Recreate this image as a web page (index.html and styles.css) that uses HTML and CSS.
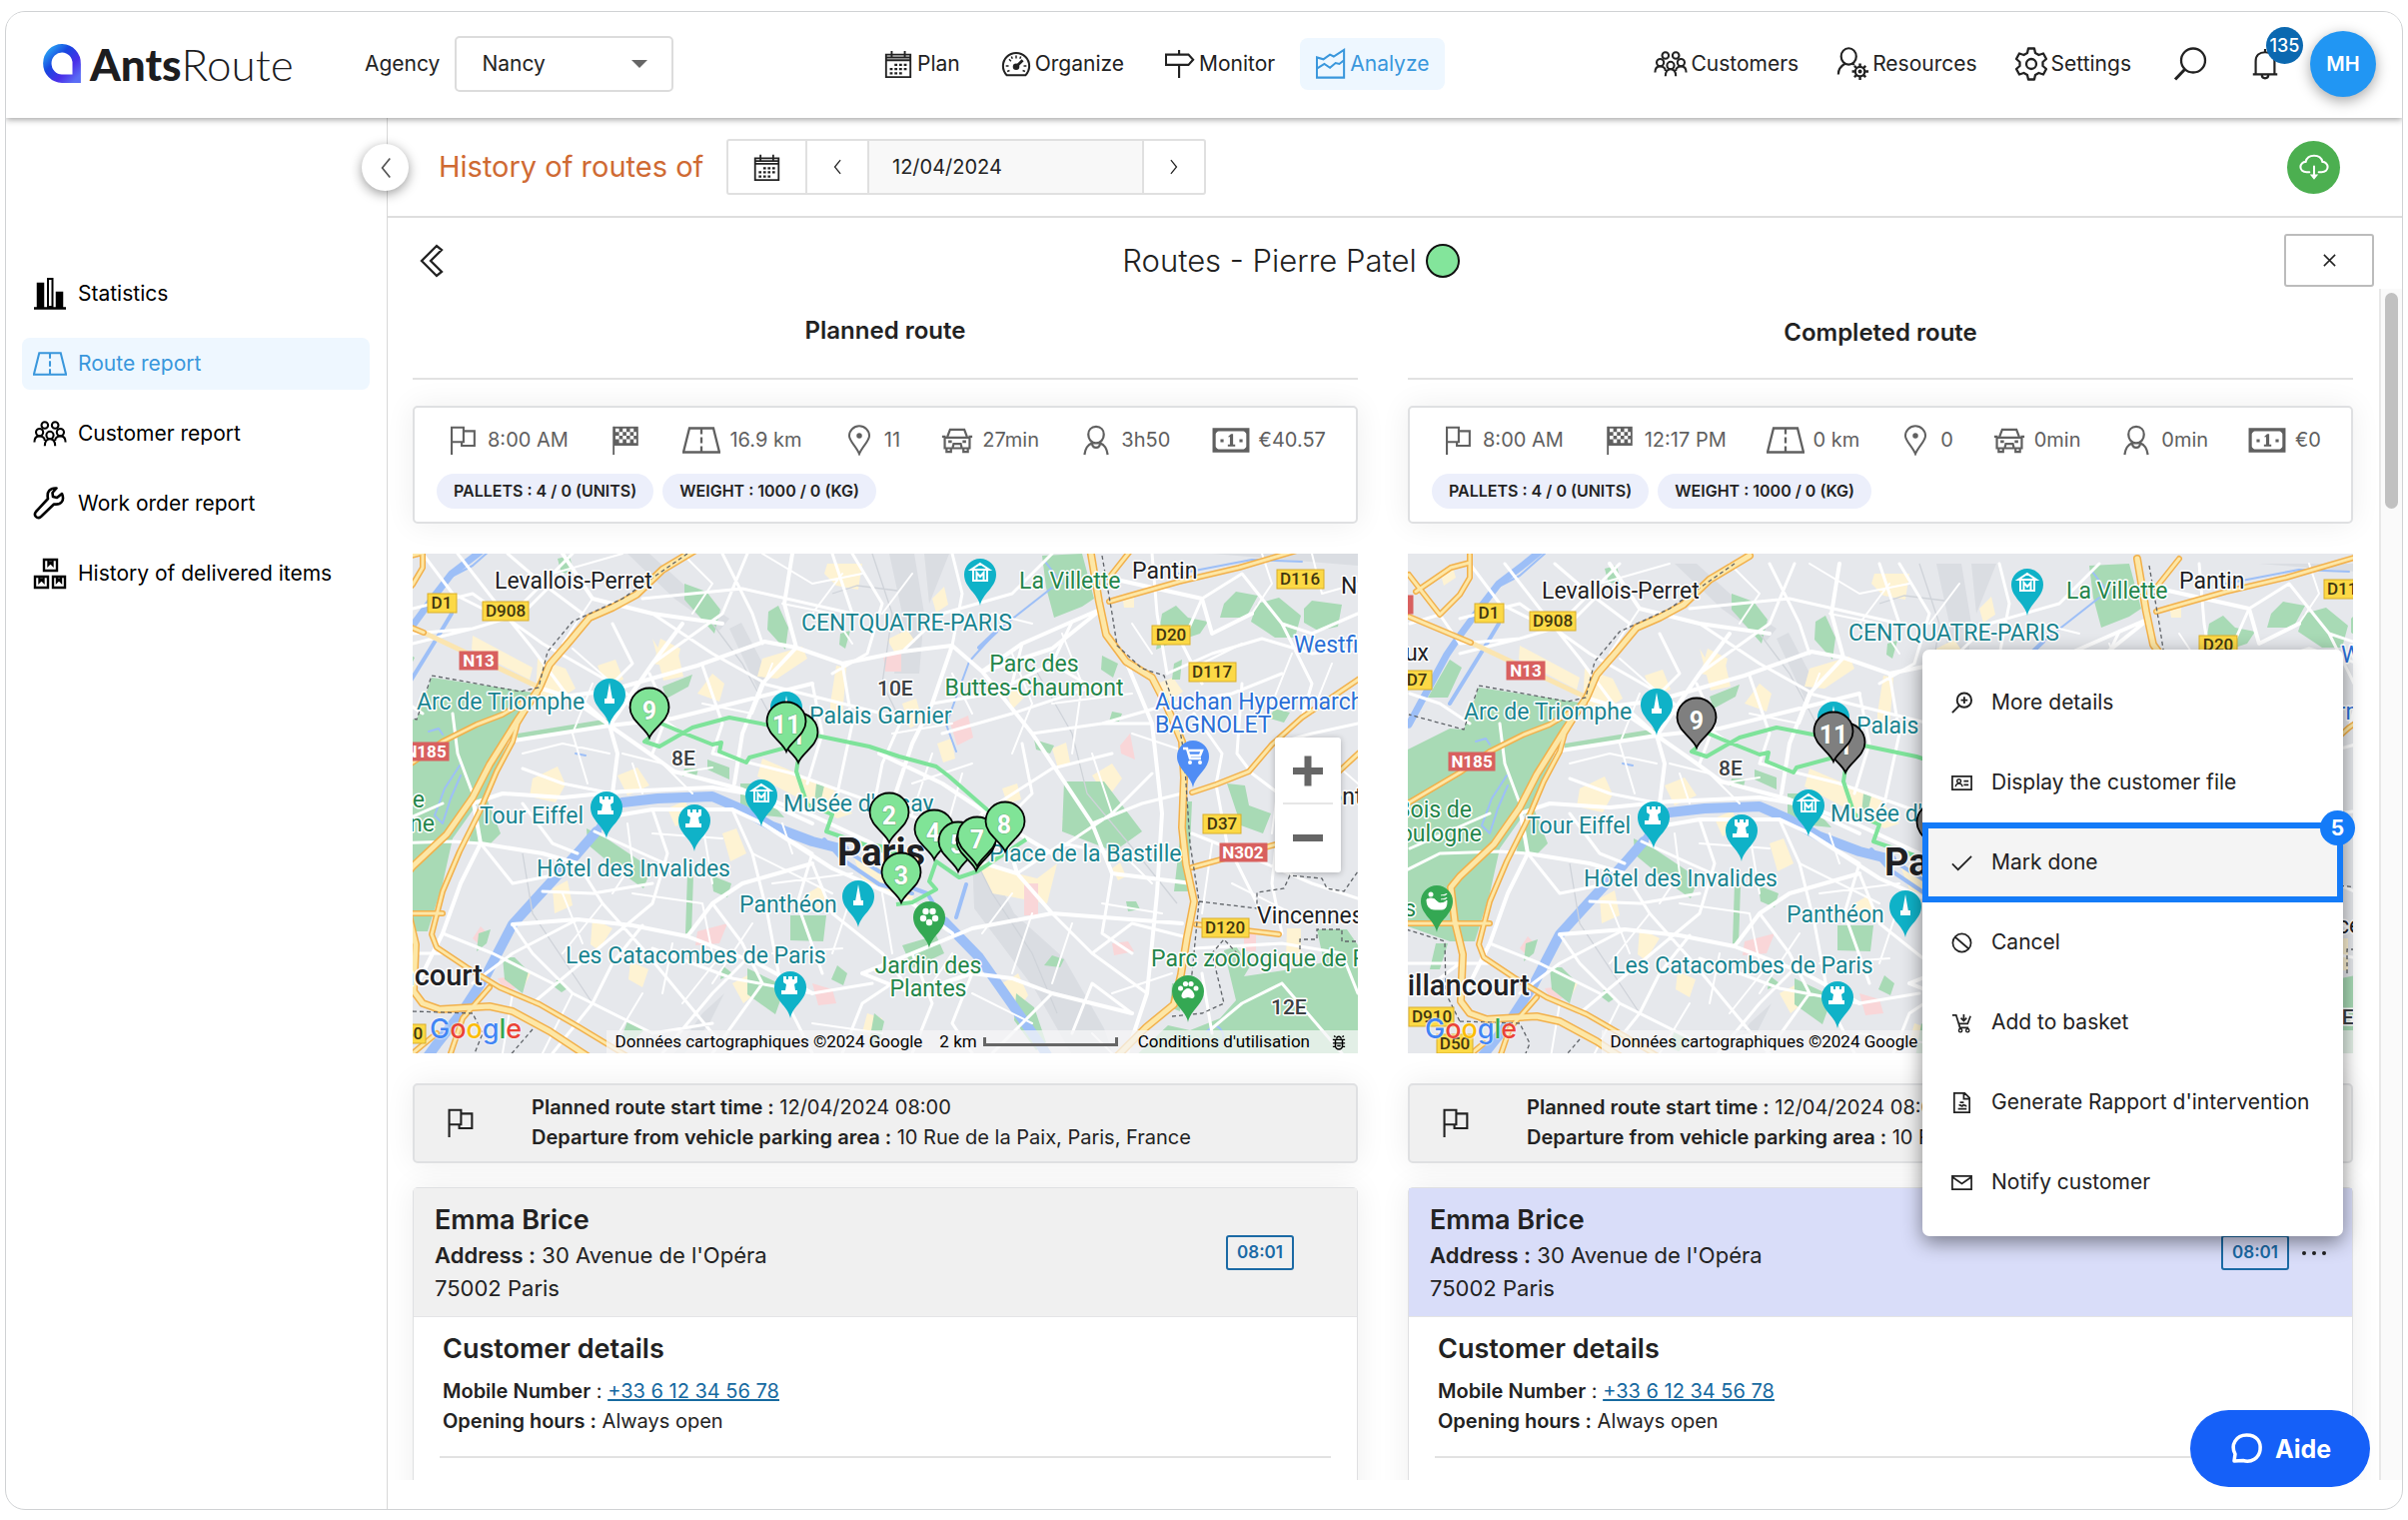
FILE: index.html
```html
<!DOCTYPE html>
<html lang="en">
<head>
<meta charset="utf-8">
<title>AntsRoute - Route report</title>
<meta name="viewport" content="width=device-width, initial-scale=1">
<link rel="stylesheet" href="styles.css">
</head>
<body>
<svg class="sprite" aria-hidden="true">
  <defs>
    <linearGradient id="logo-a" x1="0" y1="0" x2="1" y2="1"><stop offset="0" stop-color="#2ba8f5"/><stop offset=".35" stop-color="#1747e0"/><stop offset=".7" stop-color="#4a2fe8"/><stop offset="1" stop-color="#5a6cf5"/></linearGradient>
  </defs>
  <symbol id="i-calendar" viewBox="0 0 32 32"><path d="M3 6h26v24H3zM3 12h26M3 9h26M9 2v6M23 2v6" fill="none" stroke="currentColor" stroke-width="2"/><path d="M12 17h3M17 17h3M22 17h3M7 21.500h3M12 21.500h3M17 21.500h3M22 21.500h3M7 26h3M12 26h3M17 26h3" stroke="currentColor" stroke-width="2.500"/></symbol>
  <symbol id="i-gauge" viewBox="0 0 32 32"><path d="M6 28A14 14 0 1 1 26 28Z" fill="none" stroke="currentColor" stroke-width="2.200" stroke-linejoin="round"/><circle cx="16" cy="19" r="3.500" fill="currentColor"/><path d="M16 19l7-7" stroke="currentColor" stroke-width="3"/><path d="M5 18h3M24 18h3M16 7v3M8.500 11l2 2M6.500 24l2.500-1M25.500 24L23 23M11 8l1 2.500M21 8l-1 2.500" stroke="currentColor" stroke-width="1.600"/></symbol>
  <symbol id="i-sign" viewBox="0 0 32 32"><path d="M1 6h24l5 5.500L25 17H1zM15 1v5M15 17v14" fill="none" stroke="currentColor" stroke-width="2.300"/></symbol>
  <symbol id="i-chart" viewBox="0 0 32 32"><path d="M1 9v21.500h29V1L19 8l-4-2-7 5zM1 21l8-5 6 4 6-5 4 1 5-4" fill="none" stroke="currentColor" stroke-width="2.200"/></symbol>
  <symbol id="i-group" viewBox="0 0 36 28"><g fill="none" stroke="currentColor" stroke-width="2.200"><circle cx="12.500" cy="5" r="3.500"/><circle cx="23.500" cy="5" r="3.500"/><circle cx="7" cy="12.500" r="3.800"/><circle cx="29" cy="12.500" r="3.800"/><circle cx="18" cy="15.500" r="3.800"/><path d="M1.500 23c0-4 2-6.500 5.500-6.500s5.500 2.500 5.500 5M23.500 21.500c0-2.500 2-5 5.500-5s5.500 2.500 5.500 6.500M12.500 27c0-4.500 2-7.500 5.500-7.500s5.500 3 5.500 7.500"/></g></symbol>
  <symbol id="i-usergear" viewBox="0 0 34 36"><g fill="none" stroke="currentColor" stroke-width="2.300"><ellipse cx="13" cy="10" rx="8" ry="8.700"/><path d="M2 29c0-6 3-9 7.500-11.500M17 17.500l2 1.500"/><circle cx="25" cy="26" r="5"/><circle cx="25" cy="26" r="1"/><path stroke-width="2.600" d="M25 17.500v4M25 31v4M16.500 26h4M30 26h4M19 20l2.500 2.500M28.500 29.500L31 32M31 20l-2.500 2.500M21.500 29.500L19 32"/></g></symbol>
  <symbol id="i-gear" viewBox="0 0 34 34"><path d="M14 1.500h6l1 4.500 3.500 2 4.500-1.500 3 5.500-3.500 3v4l3.500 3-3 5.500-4.500-1.500-3.500 2-1 4.500h-6l-1-4.500-3.500-2L5 27.500 2 22l3.500-3v-4L2 12l3-5.500L9.500 8 13 6z" fill="none" stroke="currentColor" stroke-width="2.300" stroke-linejoin="round"/><circle cx="17" cy="17" r="5" fill="none" stroke="currentColor" stroke-width="2.300"/></symbol>
  <symbol id="i-search" viewBox="0 0 34 34"><circle cx="20" cy="13.500" r="12" fill="none" stroke="currentColor" stroke-width="2.300"/><path d="M12 22L2 32.500" stroke="currentColor" stroke-width="3"/></symbol>
  <symbol id="i-bell" viewBox="0 0 28 34"><path d="M1 28h26M4 28V14C4 8 8 4.500 14 4.500S24 8 24 14v14M14 1v3M10.500 28.500c0 5 7 5 7 0" fill="none" stroke="currentColor" stroke-width="2.300"/></symbol>
  <symbol id="i-cloud" viewBox="0 0 32 28"><path d="M11 19H8c-4 0-6.500-2.500-6.500-5.500S4 8 7 8c1-4 4.500-6.500 9-6.500S24 4 25 8c3 0 5.500 2.500 5.500 5.500S28 19 24 19h-3M16 13v11" fill="none" stroke="currentColor" stroke-width="2.200" stroke-linecap="round"/><path d="M11.500 21.500h9L16 27z" fill="currentColor"/></symbol>
  <symbol id="i-back" viewBox="0 0 26 34"><path d="M17 2L2 17l15 15 5-4-11-11L22 6z" fill="none" stroke="currentColor" stroke-width="2.300"/></symbol>
  <symbol id="i-left" viewBox="0 0 16 28"><path d="M13 3L4 14l9 11" fill="none" stroke="currentColor" stroke-width="2"/></symbol>
  <symbol id="i-right" viewBox="0 0 16 28"><path d="M3 3l9 11-9 11" fill="none" stroke="currentColor" stroke-width="2"/></symbol>
  <symbol id="i-close" viewBox="0 0 16 16"><path d="M2 2l12 12M14 2L2 14" stroke="currentColor" stroke-width="1.600"/></symbol>
  <symbol id="i-bars" viewBox="0 0 34 34"><path d="M1 31.500h32M5 7h5v24H5zM24 16h5v15h-5z" fill="currentColor" stroke="currentColor" stroke-width="2.500"/><path d="M15 2h4.500v28H15z" fill="none" stroke="currentColor" stroke-width="2"/></symbol>
  <symbol id="i-road" viewBox="0 0 38 26"><path d="M7 1h24l6 24H1zM19 1v6M19 10v6M19 19v6" fill="none" stroke="currentColor" stroke-width="2.300"/></symbol>
  <symbol id="i-wrench" viewBox="0 0 34 34"><path d="M29 7l-5 4-4-1-.500-4 4-4.500C17 1 13.500 5 15 12L3 25c-3 4 1.500 8 5 5l13-12.500c7 1 11-3.500 8-10.500z" fill="none" stroke="currentColor" stroke-width="2.600" stroke-linejoin="round"/></symbol>
  <symbol id="i-boxes" viewBox="0 0 34 32"><path d="M11 2h13v11H11zM2 19h13v11H2zM20 19h12v11H20zM15.500 2v5l2-2 2 2V2M6.500 19v5l2-2 2 2v-5M24 19v5l2-2 2 2v-5" fill="none" stroke="currentColor" stroke-width="2.400"/></symbol>
  <symbol id="i-flag" viewBox="0 0 30 34"><path d="M3 33V3h13v16H3M16 7h12v16H14v-4" fill="none" stroke="currentColor" stroke-width="2.300"/></symbol>
  <symbol id="i-finish" viewBox="0 0 30 34"><path d="M2 33V2" stroke="currentColor" stroke-width="2"/><path d="M2 2h27v21H2z" fill="currentColor"/><path fill="#fff" d="M4 4h4v4H4zM12 4h4v4h-4zM20 4h4v4h-4zM8 8h4v4H8zM16 8h4v4h-4zM24 8h3v4h-3zM4 12h4v4H4zM12 12h4v4h-4zM20 12h4v4h-4zM8 16h4v4H8zM16 16h4v4h-4zM24 16h3v4h-3z"/></symbol>
  <symbol id="i-pin" viewBox="0 0 26 34"><path d="M13 32C10 24 2 18 2 12a11 10.500 0 0 1 22 0c0 6-8 12-11 20z" fill="none" stroke="currentColor" stroke-width="2.200"/><circle cx="13" cy="12" r="3" fill="currentColor"/></symbol>
  <symbol id="i-car" viewBox="0 0 36 28"><path d="M7 10L10 2h16l3 8M1 10h4M31 10h4M4 11h28v12H4zM6 23v4h5v-4M25 23v4h5v-4M13 22l1-4h8l1 4" fill="none" stroke="currentColor" stroke-width="2.500"/><path d="M8 14h4v3H8zM24 14h4v3h-4z" fill="currentColor"/></symbol>
  <symbol id="i-person" viewBox="0 0 30 32"><path d="M15 2c5 0 8 3.500 8 8s-3 9-8 9-8-4.500-8-9 3-8 8-8zM3 31c1-7 3-10 8-12 0 3 1.500 4.500 4 4.500s4-1.500 4-4.500c5 2 7 5 8 12" fill="none" stroke="currentColor" stroke-width="2.300"/></symbol>
  <symbol id="i-bill" viewBox="0 0 36 24"><path d="M2 2h32v20H2z" fill="none" stroke="currentColor" stroke-width="3"/><path d="M2 2h5l-5 5zM34 2h-5l5 5zM2 22h5l-5-5zM34 22h-5l5-5zM15 9l3-3h2v10h2v2h-7v-2h2V9zM8 11h3v3H8zM26 11h3v3h-3z" fill="currentColor"/></symbol>
  <symbol id="i-more" viewBox="0 0 24 24"><circle cx="14.500" cy="9" r="7.500" fill="none" stroke="currentColor" stroke-width="2"/><path d="M9.500 14.500L2 22M11 9h7M14.500 5.500v7" stroke="currentColor" stroke-width="2"/></symbol>
  <symbol id="i-card" viewBox="0 0 24 24"><path d="M2 5h20v14H2zM14 10h5M14 14h5" fill="none" stroke="currentColor" stroke-width="1.800"/><circle cx="9" cy="10" r="2" fill="none" stroke="currentColor" stroke-width="1.500"/><path d="M5.500 16c0-4.500 7-4.500 7 0" fill="none" stroke="currentColor" stroke-width="1.500"/></symbol>
  <symbol id="i-check" viewBox="0 0 24 24"><path d="M2 13l6 6L22 5" fill="none" stroke="currentColor" stroke-width="1.800"/></symbol>
  <symbol id="i-ban" viewBox="0 0 24 24"><circle cx="12" cy="12" r="9.500" fill="none" stroke="currentColor" stroke-width="1.800"/><path d="M5 6l14 12" stroke="currentColor" stroke-width="1.800"/></symbol>
  <symbol id="i-basket" viewBox="0 0 24 24"><path d="M2 4h4l4 13h9M9 13h9l3-8M14 3v6M11 7l3 3 3-3" fill="none" stroke="currentColor" stroke-width="1.800"/><circle cx="10.500" cy="20" r="1.700" fill="none" stroke="currentColor" stroke-width="1.500"/><circle cx="18" cy="20" r="1.700" fill="none" stroke="currentColor" stroke-width="1.500"/></symbol>
  <symbol id="i-doc" viewBox="0 0 24 24"><path d="M4 2h11l5 5v15H4zM14 2v6h6M8 18.500h9M10 11.500h4M9 15c2-2 3 2 4 0s2 1 4 0" fill="none" stroke="currentColor" stroke-width="1.800"/></symbol>
  <symbol id="i-mail" viewBox="0 0 24 24"><path d="M2 5h20v14H2zM2 6l10 7 10-7" fill="none" stroke="currentColor" stroke-width="1.800"/></symbol>
  <symbol id="i-chat" viewBox="0 0 34 34"><path d="M5 29l1-7C1 13 7 3 17.500 3S32 10 31 18s-9 13-17 10.500z" fill="none" stroke="currentColor" stroke-width="3.500" stroke-linejoin="round"/></symbol>
  <symbol id="i-bug" viewBox="0 0 16 18"><path d="M4 6h8v7a4 4 0 0 1-8 0zM5.500 5a2.500 2.500 0 0 1 5 0M4 3L2.500 1.500M12 3l1.500-1.500M1 6h3M12 6h3M1 10h14M1 14h3M12 14h3M6 13h4" fill="none" stroke="currentColor" stroke-width="1.700"/></symbol>

  <!-- map pins: the tip of each is at 24,56 -->
  <symbol id="p-stop" viewBox="0 0 48 58" overflow="visible"><path d="M24 56C20 46 4.500 39 4.500 26a19.500 19.500 0 0 1 39 0C43.500 39 28 46 24 56z" stroke="#000" stroke-width="1.800"/></symbol>
  <symbol id="p-poi" viewBox="0 0 48 58"><path d="M24 56C22 44 8 38 8 25a16 16 0 0 1 32 0C40 38 26 44 24 56z"/></symbol>
  <symbol id="p-tower" viewBox="0 0 48 58"><use href="#p-poi" width="48" height="58" fill="#0fb2c8"/><path d="M24 13l3 17h-6zM19 29h10v5H19z" fill="#fff"/></symbol>
  <symbol id="p-castle" viewBox="0 0 48 58"><use href="#p-poi" width="48" height="58" fill="#0fb2c8"/><path d="M17 14h3v3h2v-3h4v3h2v-3h3v6l-3 2 1 6h2v4H15v-4h4l1-6-3-2z" fill="#fff"/></symbol>
  <symbol id="p-museum" viewBox="0 0 48 58"><use href="#p-poi" width="48" height="58" fill="#0fb2c8"/><path d="M24 14l9 6H15zM16 31h16M17 21v10M31 21v10M20.500 30v-7l3.500 4 3.500-4v7" fill="none" stroke="#fff" stroke-width="2"/></symbol>
  <symbol id="p-flower" viewBox="0 0 48 58"><use href="#p-poi" width="48" height="58" fill="#34a853"/><g fill="#fff"><circle cx="20.500" cy="19" r="3.200"/><circle cx="27.500" cy="19" r="3.200"/><circle cx="18" cy="26" r="3.200"/><circle cx="30" cy="26" r="3.200"/><circle cx="24" cy="30" r="3.200"/></g></symbol>
  <symbol id="p-paw" viewBox="0 0 48 58"><use href="#p-poi" width="48" height="58" fill="#34a853"/><g fill="#fff"><circle cx="16.500" cy="22" r="2.500"/><circle cx="21.500" cy="17.500" r="2.600"/><circle cx="27" cy="17.500" r="2.600"/><circle cx="32" cy="22" r="2.500"/><path d="M24 22c4 0 8 7 6 9s-4 0-6 0-4 2-6 0 2-9 6-9z"/></g></symbol>
  <symbol id="p-slide" viewBox="0 0 48 58"><use href="#p-poi" width="48" height="58" fill="#34a853"/><path d="M14 23c0 6 2 10 8 10h7c5 0 5-6 5-9-3 3-7 4-10 1-2-3-6-4-10-2zM28 19c2-1 5 1 6-2M28 23c2-1 5 1 6-2" fill="#fff" stroke="#fff"/><circle cx="18" cy="18" r="2.500" fill="#fff"/></symbol>
  <symbol id="p-cart" viewBox="0 0 48 58"><use href="#p-poi" width="48" height="58" fill="#4f8df5"/><path d="M14 17h4l3 10h11M20 19h13l-2 5H21" fill="none" stroke="#fff" stroke-width="2.500"/><circle cx="21" cy="31" r="2" fill="#fff"/><circle cx="31" cy="31" r="2" fill="#fff"/></symbol>

  <symbol id="map-base" overflow="visible">
    <path d="M-60-20H1000V520H-60z" fill="#e6e8ec"/>
    <g fill="#dadde2">
      <path d="M215 0h22l50 45 30 20-10 12-45-32zM317 75l12-6 26 50-8 20zM477 0h25l10 60-5 60h-25l8-60zM512 0h25l-20 50zM560 300l22 20 20 40 50 45 40 70 10 30h-40l-40-70-60-80zM290 460l22-20-15 30-25 30h-10zM800 0h146v12z"/>
    </g>
    <g fill="#fef3d3">
      <path d="M60 82l60 32-3 12-58-30zM125 105l28 10 10 20-22 14-18-8zM240 85l12 20 14-4 5 22-20 4zM185 112l18-6 8 20-18 6zM120 225l25-12 8 18-10 18-26-6zM205 222l20-8 12 18-22 10zM248 85l20 10-5 20-22-5zM285 140l15-20 12 10-5 18zM350 105l40-12 5 12-30 20-20-2zM418 150l6-38 10 2-4 50-12 8zM350 205l70 30 20 25-15 5-80-42zM415 10h35l-4 26-22-4-12-12zM440 300l30 10 35 10-5 28-50-22zM565 310l60 15 20-15-10 40-55-10zM520 45l12-12 4 18-12 8zM475 86l20-10 8 12-20 12zM490 150l14-5 6 22-12 8zM525 190l14-5 4 20-12 4zM595 140l12-10 5 14-12 12zM590 235l15-5 4 16-14 4zM640 195l14-6 4 20-12 6zM680 222l20-12 10 15-15 20zM710 40h12v14h-10zM180 365l20 10-14 22-8-6zM140 335l15-8 5 25-18 8zM100 410l18 10-8 16-14-8zM310 280l14-5 10 25-16 8zM395 340l14-8 6 20-14 4zM320 430l15-8 8 18-12 10zM700 315l8-6 6 14-8 4zM875 375h14v32h-15zM590 430l16-10 10 22-10 14zM455 460l15 5-5 20-15-6zM745 130l16-6 10 14-14 10zM218 408l18 8-6 18-14-8zM255 255l18-8 6 18-16 8zM650 265l18-6 8 14-18 8zM-20 8l12-8 4 14-12 8z"/>
    </g>
    <g fill="#f9d6d8"><path d="M285 378l30-8-8 20-24 2zM471 100h18v18h-16zM538 170l18-8 5 22-16 8zM708 192l10-12 5 26-14-6zM612 330h14v32h-14zM400 430l20 6 4 14-18 2zM700 390l16-2 6 10-20 4zM85 425l16-2 6 10-14 6zM60 385l8-12 6 6-6 14zM832 380h12v18h-12z"/></g>
    <g fill="#a8dab5">
      <path d="M19 124L120 139 97 185 72 240 40 285 30 330 15 378-10 378-60 360V190L-10 165 4 166z"/>
      <path d="M70 235l18 45-12 12-20-2zM145 5l12-3 4 16-12 2zM272 30l22 8 14 18-6 24-30-34zM356 58l10-6 10 22-3 22-18-20zM250 133l30-12-4 12-22 12zM295 206l22 8 0 12-22-10zM272 215h14l-2 8h-14zM404 230l8 2-4 18h-6zM428 80l10-3-5 18-6-4zM328 230l14 0 30 34-20-2-24-12zM174 275l20 10 45 30-8 20-20-14-36-30zM275 320l6 2-2 60-6-2zM299 322l20 8-4 14-14-6zM378 362h36l-3 26-33-1zM335 415l38 18-10 28-28-20zM425 412l10 8-4 12-12-6zM310 412l10 8-12 6zM145 425l10 10-6 4-8-6zM90 404l12 0 14 14-6 22-18-14zM66 380l12-4-4 14-10 8zM462 460l10 8-6 26h-10zM215 468l18 8-14 12-10-4z"/>
      <path d="M630 2l40-2 12 45-12 8-28 11-8-30zM652 228l40 0 38 50-28 20-52-20zM490 392l34-10 8 18-32 15zM622 186l20 6-4 8-14-4zM690 102l16 8-5 14-12-8zM750 60l14-8 12 12 20 4-8 12-30 10-14 6zM812 50l12-12 22 4-12 22-26 0zM845 50l22-6 22 18-6 22-20 0-24-16zM892 55l8-8 30 4-4 22-20 4-14-8zM700 158l10 2-3 8h-10zM772 248h8l-4 90h-14zM815 230l18 2 4 20 22 8-8 20-22-8zM770 315h8l-5 20h-8zM604 440l18 14 12 35-10 8-22-30zM640 402l12 4-4 8-16-2zM714 348h10l4 8-12 2zM905 376h30l14 20v110H720l36-34 22 5 30-12 16-18-12-50 12-4 14 20-6 10 40-6 40-8zM760 430h10l-2 28-10-4zM862 155l16 4-6 10-14-4zM762 110l8-4-2 20h-8z"/>
      <path d="M105 180l92-15v6l-92 16z"/>
      <path d="M-10 96l12 8-14 30-20 0zM-24 380l12 0-8 26h-10z"/>
    </g>
    <g fill="none" stroke="#9dbff7" stroke-linecap="round" stroke-linejoin="round">
      <path stroke-width="10" d="M210 249L245 245 300 243 330 256 360 273 400 288 432 296M184 278L164 301 130 338 100 371 74 421 50 458 24 491 10 510M532 368L567 404 600 451 630 494 640 510"/>
      <path stroke-width="7" d="M210 249L195 262 184 278M90-20L64 1 39 20 22 42 0 72-13 91-51 161"/>
      <path stroke-width="4" d="M432 296L467 318 490 331 515 340 532 368M412 286L430 306 467 331 500 340M554 331L544 364M584 78L567 94M39 60L24 85-10 140"/>
      <path stroke-width="2" d="M640 34L584 78 557 108 534 171 544 198M37 24L60 12 85-10M767 20L840 6 890 8M633 8L650 30M47 212L32 235 22 262 30 270 38 245 48 222M16 178l10-3 4 6M163 200l10 2M795 478c10-12 20 0 15 14"/>
    </g>
    <g fill="none" stroke="#cfd3d9" stroke-width="1.300"><path d="M420 40l25-8 40 5M300 70l30 40 35 65M620 110l40 70 15 60 50 60 40 50M560 300l20 40 40 60 25 60M110 300l10 60 60 90M460 0l20 60-10 70 20 40"/></g>
    <g fill="none" stroke="#fff" stroke-linejoin="round" stroke-linecap="round">
      <path stroke-width="4" d="M135 145L197 137 285 112 352 88 384 94 430 110 490 98 540 92 570 118 610 90 660 68 690 55M197 172L237 200 262 218 330 236 400 262 460 290M197 172L205 200 200 240 195 262M197 172L170 148 120 132M197 172L240 110 270 70M197 172L260 165 320 150 400 130M95 188L197 172M60 250L90 240 150 244 210 238 300 234 335 240 400 270M205 262L240 256 320 256 350 270 420 315 500 350 540 380M60 244L68 290 48 330 30 380 0 440M68 290L130 300 165 310M100 371L165 366 220 372 275 383 345 410 400 440M275 383L300 350 330 330 400 310M384 94L372 50 380 0M384 94L350 130 330 180 322 230M540 92L520 150 500 190 480 250 470 300M570 118L620 180 680 270 700 320 780 330M467 200L530 230 590 270 640 300M590 270L605 320 640 360 770 370M640 360L560 375 500 400 450 420M690 55L640 95 570 118M605 320L540 300M450 420L500 440 560 420 600 425 640 440 720 460M714 108L740 170 750 260 745 340 735 440 715 500M700 25L790 45 800 80 840 60M150 0L180 45 240 60 310 70"/>
      <path stroke-width="3" d="M45 0L80 45 120 95 157 145 197 172M0 55L60 40 130 90 200 130 270 180M95 0L130 30 170 60M100 60L140 20 160 0M0 90L60 75 110 60 150 20M200 70L220 110 190 140M230 45L330 35 440 60M240 60L300 100 350 128M310 0L340 60 350 90M440 0L470 50 455 100 420 120M440 60L420 0M335 0L310 60 240 110M290 112L310 170 300 200M237 120L255 160 240 200M350 130L430 150 490 165M400 130L410 180 395 230M430 110L440 170 425 240M490 165L470 210 460 260M300 200L380 220 450 245 520 270M200 240L150 230 110 215M110 250L140 290 165 300M68 290L100 330 150 320M130 338L180 340 240 330M165 310L190 350 230 395 300 480 320 500M182 278L230 300 275 320M240 256L255 300 240 350 180 400 120 450M320 256L340 300 355 360 370 440 400 500M350 270L400 300 385 350 410 420M230 372L200 410 180 450 140 500M300 350L330 390 350 430 300 500M400 310L420 360 470 400 500 440M100 371L120 400 160 440 240 480 300 470M30 380L80 400 140 430M60 430L100 400 165 366M240 395L320 425 400 440 460 430M250 500L300 440 340 400M430 500L450 450 480 430M500 400L520 450 500 500M560 420L540 470 560 500M640 440L600 480 580 500M720 460L680 430 660 480M640 360L680 400 735 440M680 400L720 370 775 384M700 320L690 380 720 400M620 180L690 170 760 150M530 180L600 160 690 130M680 270L730 250 770 240M640 300L700 260 740 220M605 320L650 290 700 300M540 300L570 260 640 215 700 200M590 270L620 240 610 190M520 150L580 140 640 110M490 98L530 60 600 40M540 92L550 40 540 0M600 40L640 0M660 68L640 110 690 140M610 90L600 130M740 0L745 60 755 120M790 45L830 20 870 70 900 80 946 60M755 120L800 100 850 85 900 100 946 95M760 150L820 140 870 120M790 45L770 90 790 130M830 130L825 200 840 220M782 160L810 200 804 231M870 70L900 130 890 164M804 231L815 290 845 350M840 220L880 250 946 240M780 280L830 300 900 330 946 345M860 191L900 180 946 170M864 291L860 330 870 380M782 395L870 390 930 400M790 420L800 480M930 400L946 440M870 430L930 500M870 430L830 450 800 475M740 170L690 170M-50 60L-20 51 0 80 60 75M-50 130L-20 140 10 160M30 250L-50 285M40 160L45 200 60 240M-60 310L-20 290 40 288 68 290M-60 400L-10 400 30 400M-40 430L0 400M10 0L40 40 80 60"/>
      <path stroke-width="2" d="M160 95L200 130 230 170M140 20L210 0M180 45L150 90M270 0L300 30 280 60M350 0L400 30 450 20M370 50L420 60 440 90M290 150L340 160 360 110M210 200L250 210 280 240M110 200L150 190 197 200M215 270L220 310 200 340M240 280L310 285M290 270L300 330M340 300L420 340M360 330L440 320M150 340L170 390M190 350L150 400M220 340L290 350 300 400M260 390L250 440M310 400L270 450M340 370L300 430M360 400L430 395M380 300L370 270M440 340L420 400M470 340L480 400M400 470L470 480M230 440L200 490M100 440L90 500M160 440L130 500M520 200L500 260M550 220L530 290M500 230L560 210M480 180L540 170M540 120L560 160M580 60L620 70M600 100L620 150 600 200M650 80L670 130 660 200M640 150L720 140M680 200L700 260M600 340L570 380M620 360L600 420M660 370L640 430M690 350L750 360M700 440L760 420M560 440L620 470M680 480L700 500M540 400L520 430M830 90L790 110M880 100L860 150M920 110L900 160M870 200L860 280M900 190L946 230M800 290L790 360M820 330L900 370M900 0L910 40 946 30M850 0L860 30 840 60M720 70L740 100M720 180L780 200M710 300L740 330M180 130L160 180 175 230M220 210L230 240M260 220L300 214M430 20L400 60M500 20L470 60"/>
    </g>
    <g fill="none" stroke="#fbe5b0" stroke-width="5"><path d="M11 79L127 134"/></g>
    <g fill="none" stroke-linejoin="round" stroke-linecap="round">
      <g stroke="#f2b04a">
        <path stroke-width="8" d="M290-8L250 16 224 41 200 54 177 64 157 88 137 111 127 134 104 168 77 211 60 244 34 281 0 313-9 324-5 358 3 391 1 438 10 450 27 456 77 453 100 458 137 478 175 503M678-5L687 48 694 81 714 108 740 124 754 151 770 188 772 224 770 274 774 311 782 348 775 384 769 421 762 451 734 474 705 503"/>
        <path stroke-width="6" d="M127 134L105 170 100 188 84 218 67 258 47 298 30 338 19 381 24 394 54 414 87 434 127 451 167 474 215 503M-61 245L0 209 30 188 64 171 90 161 125 140M10-9V14L0 31-20 51-51 11M10-1L-9 4-44 28M-51 53L11 79M895-6L827 14 767 28 714 43 697 48M720-5L697 24M955 120L890 164 860 191 837 218 804 231 780 239M955 192L927 218M780 314L864 291M784 371L867 381M-60 360L30 360M77 434L50 465 38 500M0 500L24 480"/>
      </g>
      <g stroke="#fde7a6">
        <path stroke-width="5" d="M290-8L250 16 224 41 200 54 177 64 157 88 137 111 127 134 104 168 77 211 60 244 34 281 0 313-9 324-5 358 3 391 1 438 10 450 27 456 77 453 100 458 137 478 175 503M678-5L687 48 694 81 714 108 740 124 754 151 770 188 772 224 770 274 774 311 782 348 775 384 769 421 762 451 734 474 705 503"/>
        <path stroke-width="3" d="M127 134L105 170 100 188 84 218 67 258 47 298 30 338 19 381 24 394 54 414 87 434 127 451 167 474 215 503M-61 245L0 209 30 188 64 171 90 161 125 140M10-9V14L0 31-20 51-51 11M10-1L-9 4-44 28M-51 53L11 79M895-6L827 14 767 28 714 43 697 48M720-5L697 24M955 120L890 164 860 191 837 218 804 231 780 239M955 192L927 218M780 314L864 291M784 371L867 381M-60 360L30 360M77 434L50 465 38 500M0 500L24 480"/>
      </g>
    </g>
    <path fill="none" stroke="#5f6368" stroke-width="1.300" stroke-dasharray="4 3" d="M275 0L210 45 160 68 135 98 126 134 108 138 19 122 4 166-51 151M690 2L700 60 705 92 730 115 752 122 765 160 772 200 778 290 787 348 845 355V339L872 335 878 322 910 325 915 335 932 338 946 318M787 348L780 420 775 460M760 463L790 460 812 450 800 400 812 386 825 400M0 458L60 460 70 480 62 500M120 476L95 505M888 410V386H905V376H930V388H946M-60 364L-15 378-14 430 0 458"/>
    <g fill="none" stroke="#7ee39a" stroke-width="4" stroke-linejoin="round"><path d="M237 165L270 179 300 191 309 189 307 198 334 209 337 204 374 194M237 184L232 188 247 193 280 174 317 164 374 175M386 180L404 182 457 193 487 203 524 213 537 223 593 272M386 205L384 218 395 251 420 261 414 278 487 303M462 292L484 295 482 305M484 351L500 349 524 336 517 328 524 308 547 324 565 318 614 286"/></g>
  </symbol>
</svg>

<div class="frame">
  <header class="topbar">
    <a class="logo" href="#" aria-label="AntsRoute">
      <svg class="logo-mark" viewBox="0 0 40 40"><path d="M34 20V34H20A14 14.500 0 1 1 34 20Z" fill="none" stroke="url(#logo-a)" stroke-width="8"/></svg>
      <span class="logo-text"><b>Ants</b>Route</span>
    </a>
    <div class="agency">
      <label for="agency">Agency</label>
      <span class="select-wrap"><select id="agency"><option>Nancy</option></select></span>
    </div>
    <nav class="nav nav-main">
      <a href="#"><svg class="ic"><use href="#i-calendar"/></svg>Plan</a>
      <a href="#"><svg class="ic"><use href="#i-gauge"/></svg>Organize</a>
      <a href="#"><svg class="ic"><use href="#i-sign"/></svg>Monitor</a>
      <a href="#" class="active"><svg class="ic"><use href="#i-chart"/></svg>Analyze</a>
    </nav>
    <nav class="nav nav-side">
      <a href="#"><svg class="ic wide"><use href="#i-group"/></svg>Customers</a>
      <a href="#"><svg class="ic wide"><use href="#i-usergear"/></svg>Resources</a>
      <a href="#"><svg class="ic wide"><use href="#i-gear"/></svg>Settings</a>
    </nav>
    <div class="tools">
      <button class="plain" aria-label="Search"><svg class="ic wide"><use href="#i-search"/></svg></button>
      <button class="plain bell" aria-label="Notifications"><svg class="ic"><use href="#i-bell"/></svg><span class="count">135</span></button>
      <button class="avatar">MH</button>
    </div>
  </header>

  <div class="body">
    <aside class="sidebar">
      <button class="collapse" aria-label="Collapse menu"><svg class="chev"><use href="#i-left"/></svg></button>
      <nav class="side-nav">
        <a href="#"><svg class="ic wide"><use href="#i-bars"/></svg>Statistics</a>
        <a href="#" class="active"><svg class="ic wide"><use href="#i-road"/></svg>Route report</a>
        <a href="#"><svg class="ic wide"><use href="#i-group"/></svg>Customer report</a>
        <a href="#"><svg class="ic wide"><use href="#i-wrench"/></svg>Work order report</a>
        <a href="#"><svg class="ic wide"><use href="#i-boxes"/></svg>History of delivered items</a>
      </nav>
    </aside>

    <main class="main">
      <div class="toolbar">
        <h1>History of routes of</h1>
        <div class="date-group">
          <button class="cal" aria-label="Calendar"><svg><use href="#i-calendar"/></svg></button>
          <button aria-label="Previous day"><svg class="tiny"><use href="#i-left"/></svg></button>
          <input type="text" value="12/04/2024" aria-label="Date">
          <button aria-label="Next day"><svg class="tiny"><use href="#i-right"/></svg></button>
        </div>
        <button class="download" aria-label="Download"><svg><use href="#i-cloud"/></svg></button>
      </div>

      <div class="title-row">
        <button class="plain back" aria-label="Back"><svg><use href="#i-back"/></svg></button>
        <h2>Routes - Pierre Patel<span class="dot"></span></h2>
        <button class="close" aria-label="Close"><svg><use href="#i-close"/></svg></button>
      </div>

      <div class="scroll">
        <div class="columns">
          <section class="column">
            <h3>Planned route</h3>
            <div class="card summary">
              <div class="stats">
                <span><svg><use href="#i-flag"/></svg>8:00 AM</span>
                <span><svg><use href="#i-finish"/></svg></span>
                <span><svg class="big"><use href="#i-road"/></svg>16.9 km</span>
                <span><svg><use href="#i-pin"/></svg>11</span>
                <span><svg><use href="#i-car"/></svg>27min</span>
                <span><svg><use href="#i-person"/></svg>3h50</span>
                <span><svg class="big"><use href="#i-bill"/></svg>€40.57</span>
              </div>
              <div class="chips"><span>PALLETS : 4 / 0 (UNITS)</span><span>WEIGHT : 1000 / 0 (KG)</span></div>
            </div>
            <div class="map">
              <svg class="map-art" viewBox="0 0 946 500" preserveAspectRatio="xMidYMid slice">
                <use href="#map-base"/>
                <g class="lbl">
                  <text x="82" y="35" class="town">Levallois-Perret</text><text x="720" y="25" class="town">Pantin</text><text x="929" y="40" class="town">Noisy</text><text x="897" y="251" class="town">Montreuil</text><text x="845" y="370" class="town">Vincennes</text>
                  <text x="465" y="142" class="district">10E</text><text x="259" y="212" class="district">8E</text><text x="859" y="461" class="district">12E</text>
                  <text x="70" y="432" class="suburb end">Billancourt</text><text x="425" y="312" class="city">Paris</text>
                  <text x="4" y="156">Arc de Triomphe</text><text x="389" y="77">CENTQUATRE-PARIS</text><text x="397" y="170">Palais Garnier</text><text x="67" y="270">Tour Eiffel</text><text x="371" y="258">Musée d'Orsay</text><text x="124" y="323">Hôtel des Invalides</text><text x="577" y="308">Place de la Bastille</text><text x="327" y="359">Panthéon</text><text x="153" y="410">Les Catacombes de Paris</text>
                  <text x="607" y="35" class="park">La Villette</text><text x="622" y="118" class="park mid">Parc des</text><text x="622" y="142" class="park mid">Buttes-Chaumont</text><text x="12" y="254" class="park end">Bois de</text><text x="22" y="278" class="park end">Boulogne</text><text x="516" y="420" class="park mid">Jardin des</text><text x="516" y="443" class="park mid">Plantes</text><text x="739" y="413" class="park">Parc zoologique de Paris</text>
                  <text x="882" y="99" class="shop">Westfield</text><text x="743" y="156" class="shop">Auchan Hypermarché</text><text x="743" y="179" class="shop">BAGNOLET</text>
                </g>
                <g class="shield"><rect x="15" y="40" width="29" height="19"/><text x="29" y="55">D1</text><rect x="70" y="48" width="46" height="19"/><text x="93" y="63">D908</text><rect x="865" y="16" width="47" height="19"/><text x="888" y="31">D116</text><rect x="740" y="72" width="38" height="19"/><text x="759" y="87">D20</text><rect x="777" y="109" width="47" height="19"/><text x="800" y="124">D117</text><rect x="791" y="261" width="38" height="19"/><text x="810" y="276">D37</text><rect x="790" y="365" width="47" height="19"/><text x="813" y="380">D120</text><rect x="-23" y="471" width="36" height="19"/><text x="-5" y="486">D50</text></g>
                <g class="shield red"><rect x="47" y="98" width="38" height="18"/><text x="66" y="113">N13</text><rect x="-10" y="189" width="46" height="18"/><text x="13" y="204">N185</text><rect x="808" y="290" width="47" height="18"/><text x="831" y="305">N302</text></g>
                <use href="#p-tower" x="173" y="116" width="48" height="58"/><use href="#p-castle" x="170" y="229" width="48" height="58"/><use href="#p-castle" x="258" y="242" width="48" height="58"/><use href="#p-museum" x="325" y="217" width="48" height="58"/><use href="#p-tower" x="422" y="318" width="48" height="58"/><use href="#p-castle" x="354" y="409" width="48" height="58"/><use href="#p-museum" x="544" y="-4" width="48" height="58"/><use href="#p-tower" x="350" y="129" width="48" height="58"/><use href="#p-flower" x="493" y="339" width="48" height="58"/><use href="#p-cart" x="757" y="178" width="48" height="58"/><use href="#p-paw" x="752" y="413" width="48" height="58"/>
                <g class="stops">
                  <use href="#p-stop" x="213" y="128" width="48" height="58"/><text x="237" y="166">9</text>
                  <use href="#p-stop" x="362" y="153" width="48" height="58"/><text x="386" y="191">1</text>
                  <use href="#p-stop" x="350" y="142" width="48" height="58"/><text x="374" y="180">11</text>
                  <use href="#p-stop" x="453" y="233" width="48" height="58"/><text x="477" y="271">2</text>
                  <use href="#p-stop" x="498" y="250" width="48" height="58"/><text x="521" y="288">4</text>
                  <use href="#p-stop" x="522" y="262" width="48" height="58"/><text x="545" y="300">5</text>
                  <use href="#p-stop" x="540" y="261" width="48" height="58"/>
                  <use href="#p-stop" x="541" y="257" width="48" height="58"/><text x="565" y="295">7</text>
                  <use href="#p-stop" x="569" y="242" width="48" height="58"/><text x="592" y="280">8</text>
                  <use href="#p-stop" x="465" y="293" width="48" height="58"/><text x="489" y="331">3</text>
                </g>
              </svg>
              <div class="google"><i class="b">G</i><i class="r">o</i><i class="y">o</i><i class="b">g</i><i class="g">l</i><i class="r">e</i></div>
              <div class="zoom"><button aria-label="Zoom in" class="in"></button><button aria-label="Zoom out"></button></div>
              <div class="credits"><span>Données cartographiques ©2024 Google</span><span class="scale">2 km<i></i></span><span class="terms">Conditions d'utilisation</span><svg><use href="#i-bug"/></svg></div>
            </div>
            <div class="card start">
              <svg><use href="#i-flag"/></svg>
              <p><b>Planned route start time :</b> 12/04/2024 08:00<br><b>Departure from vehicle parking area :</b> 10 Rue de la Paix, Paris, France</p>
            </div>
            <article class="card customer">
              <header>
                <div><h4>Emma Brice</h4><p><b>Address :</b> 30 Avenue de l'Opéra<br>75002 Paris</p></div>
                <div class="actions"><span class="time">08:01</span></div>
              </header>
              <div class="details">
                <h4>Customer details</h4>
                <p><b>Mobile Number</b> : <a href="tel:+33612345678">+33 6 12 34 56 78</a><br><b>Opening hours :</b> Always open</p>
              </div>
            </article>
          </section>

          <section class="column done">
            <h3>Completed route</h3>
            <div class="card summary">
              <div class="stats">
                <span><svg><use href="#i-flag"/></svg>8:00 AM</span>
                <span><svg><use href="#i-finish"/></svg>12:17 PM</span>
                <span><svg class="big"><use href="#i-road"/></svg>0 km</span>
                <span><svg><use href="#i-pin"/></svg>0</span>
                <span><svg><use href="#i-car"/></svg>0min</span>
                <span><svg><use href="#i-person"/></svg>0min</span>
                <span><svg class="big"><use href="#i-bill"/></svg>€0</span>
              </div>
              <div class="chips"><span>PALLETS : 4 / 0 (UNITS)</span><span>WEIGHT : 1000 / 0 (KG)</span></div>
            </div>
            <div class="map">
              <svg class="map-art" viewBox="-52 -10 946 500" preserveAspectRatio="xMidYMid slice">
                <use href="#map-base"/>
                <g class="lbl">
                  <text x="82" y="35" class="town">Levallois-Perret</text><text x="720" y="25" class="town">Pantin</text><text x="845" y="370" class="town">Vincennes</text><text x="-31" y="97" class="town end">Puteaux</text>
                  <text x="259" y="212" class="district">8E</text><text x="859" y="461" class="district">12E</text>
                  <text x="70" y="432" class="suburb end">Billancourt</text><text x="425" y="312" class="city">Paris</text>
                  <text x="4" y="156">Arc de Triomphe</text><text x="389" y="77">CENTQUATRE-PARIS</text><text x="397" y="170">Palais Garnier</text><text x="67" y="270">Tour Eiffel</text><text x="371" y="258">Musée d'Orsay</text><text x="124" y="323">Hôtel des Invalides</text><text x="327" y="359">Panthéon</text><text x="153" y="410">Les Catacombes de Paris</text>
                  <text x="607" y="35" class="park">La Villette</text><text x="12" y="254" class="park end">Bois de</text><text x="22" y="278" class="park end">Boulogne</text><text x="-44" y="353" class="park end">Serres</text>
                  <text x="882" y="99" class="shop">Westfield</text><text x="743" y="156" class="shop">Auchan Hypermarché</text>
                </g>
                <g class="shield"><rect x="15" y="40" width="29" height="19"/><text x="29" y="55">D1</text><rect x="70" y="48" width="46" height="19"/><text x="93" y="63">D908</text><rect x="865" y="16" width="47" height="19"/><text x="888" y="31">D116</text><rect x="740" y="72" width="38" height="19"/><text x="759" y="87">D20</text><rect x="-23" y="471" width="36" height="19"/><text x="-5" y="486">D50</text><rect x="-51" y="444" width="45" height="19"/><text x="-28" y="459">D910</text><rect x="-57" y="107" width="29" height="19"/><text x="-43" y="122">D7</text></g>
                <g class="shield red"><rect x="47" y="98" width="38" height="18"/><text x="66" y="113">N13</text><rect x="-11" y="189" width="46" height="18"/><text x="12" y="204">N185</text><rect x="-60" y="32" width="13" height="18"/></g>
                <use href="#p-tower" x="173" y="116" width="48" height="58"/><use href="#p-castle" x="170" y="229" width="48" height="58"/><use href="#p-castle" x="258" y="242" width="48" height="58"/><use href="#p-museum" x="325" y="217" width="48" height="58"/><use href="#p-tower" x="422" y="318" width="48" height="58"/><use href="#p-castle" x="354" y="409" width="48" height="58"/><use href="#p-museum" x="544" y="-4" width="48" height="58"/><use href="#p-tower" x="350" y="129" width="48" height="58"/><use href="#p-slide" x="-47" y="313" width="48" height="58"/>
                <g class="stops">
                  <use href="#p-stop" x="213" y="128" width="48" height="58"/><text x="237" y="166">9</text>
                  <use href="#p-stop" x="362" y="153" width="48" height="58"/><text x="386" y="191">1</text>
                  <use href="#p-stop" x="350" y="142" width="48" height="58"/><text x="374" y="180">11</text>
                  <use href="#p-stop" x="453" y="233" width="48" height="58"/>
                </g>
              </svg>
              <div class="google"><i class="b">G</i><i class="r">o</i><i class="y">o</i><i class="b">g</i><i class="g">l</i><i class="r">e</i></div>
              <div class="credits"><span>Données cartographiques ©2024 Google</span><span class="scale">2 km<i></i></span><span class="terms">Conditions d'utilisation</span><svg><use href="#i-bug"/></svg></div>
            </div>
            <div class="card start">
              <svg><use href="#i-flag"/></svg>
              <p><b>Planned route start time :</b> 12/04/2024 08:00<br><b>Departure from vehicle parking area :</b> 10 Rue de la Paix, Paris, France</p>
            </div>
            <article class="card customer">
              <header>
                <div><h4>Emma Brice</h4><p><b>Address :</b> 30 Avenue de l'Opéra<br>75002 Paris</p></div>
                <div class="actions">
                  <span class="time">08:01</span>
                  <button class="plain dots" aria-label="Actions"><i></i><i></i><i></i></button>
                  <div class="menu">
                    <button><svg><use href="#i-more"/></svg>More details</button>
                    <button><svg><use href="#i-card"/></svg>Display the customer file</button>
                    <button class="current"><svg><use href="#i-check"/></svg>Mark done<span class="step">5</span></button>
                    <button><svg><use href="#i-ban"/></svg>Cancel</button>
                    <button><svg><use href="#i-basket"/></svg>Add to basket</button>
                    <button><svg><use href="#i-doc"/></svg>Generate Rapport d'intervention</button>
                    <button><svg><use href="#i-mail"/></svg>Notify customer</button>
                  </div>
                </div>
              </header>
              <div class="details">
                <h4>Customer details</h4>
                <p><b>Mobile Number</b> : <a href="tel:+33612345678">+33 6 12 34 56 78</a><br><b>Opening hours :</b> Always open</p>
              </div>
            </article>
          </section>
        </div>
        <div class="track"><div class="thumb"></div></div>
      </div>
    </main>
  </div>
</div>
<button class="help"><svg><use href="#i-chat"/></svg>Aide</button>
</body>
</html>
```

FILE: styles.css
```css
* { box-sizing: border-box; }
body {
  margin: 0;
  padding: 11px 5px 10px;
  height: 100vh;
  font: 400 20px/30px Inter, "Open Sans", sans-serif;
  color: #222;
  background: #fff;
}
h1, h2, h3, h4, p { margin: 0; font-weight: 400; }
b { font-weight: 600; }
a { color: inherit; text-decoration: none; }
button, input, select { font: inherit; color: inherit; }
button { cursor: pointer; padding: 0; border: 0; background: none; }
svg { display: block; flex: none; }
.sprite { position: absolute; width: 0; height: 0; }
.frame {
  height: 100%;
  display: flex;
  flex-direction: column;
  border: 1px solid #d0d2d4;
  border-radius: 20px;
  overflow: hidden;
}

/* top bar */
.topbar {
  position: relative;
  z-index: 3;
  flex: none;
  height: 106px;
  display: flex;
  align-items: center;
  padding: 0 26px 2px 35px;
  background: #fff;
  box-shadow: 0 2px 6px rgba(0, 0, 0, .35);
  font-size: 21px;
}
.logo { display: flex; align-items: center; gap: 7px; width: 324px; }
.logo-mark { width: 42px; height: 42px; }
.logo-text { font: 300 44px/48px Lato, sans-serif; color: #1d1d1f; }
.logo-text b { font-weight: 900; }
.agency { display: flex; align-items: center; gap: 15px; width: 503px; }
.select-wrap { position: relative; }
.select-wrap::after {
  content: "";
  position: absolute;
  right: 26px;
  top: 24px;
  border: 8px solid transparent;
  border-top-color: #666;
  border-bottom: 0;
  pointer-events: none;
}
select {
  appearance: none;
  width: 219px;
  height: 56px;
  padding: 0 25px;
  border: 2px solid #dcdcdc;
  border-radius: 5px;
  background: #fff;
}
.ic { width: 30px; height: 32px; }
.ic.wide { width: 34px; height: 34px; }
.nav { display: flex; align-items: center; }
.nav a { display: flex; align-items: center; gap: 4px; }
.nav-main { gap: 9px; margin-right: auto; }
.nav-main a { height: 52px; padding: 0 16px; border-radius: 8px; }
.nav .active, .side-nav .active { background: #eef7ff; color: #3a97dc; }
.nav-side { gap: 37px; }
.nav-side a { gap: 3px; }
.tools { display: flex; align-items: center; margin-left: 42px; }
.bell { position: relative; margin: 0 30px 0 43px; }
.count {
  position: absolute;
  left: 16px;
  top: -21px;
  width: 37px;
  height: 37px;
  border-radius: 50%;
  background: #0b68b0;
  color: #fff;
  font-size: 18px;
  font-weight: 500;
  line-height: 37px;
  text-align: center;
}
.avatar {
  width: 66px;
  height: 66px;
  border-radius: 50%;
  background: #2196f3;
  color: #fff;
  font-size: 20px;
  font-weight: 600;
  box-shadow: 0 4px 14px rgba(0, 0, 0, .35);
}

/* sidebar */
.body { flex: 1; min-height: 0; display: flex; }
.sidebar {
  position: relative;
  z-index: 2;
  flex: none;
  width: 382px;
  border-right: 1px solid #d8d8d8;
  padding: 150px 17px 0 16px;
}
.collapse {
  position: absolute;
  right: -22px;
  top: 26px;
  width: 47px;
  height: 47px;
  border-radius: 50%;
  background: #fff;
  display: grid;
  place-items: center;
  color: #555;
  box-shadow: 0 3px 12px rgba(0, 0, 0, .4);
}
.chev { width: 14px; height: 24px; }
.side-nav { display: grid; gap: 18px; font-size: 21px; }
.side-nav a {
  display: flex;
  align-items: center;
  gap: 11px;
  height: 52px;
  padding-left: 11px;
  border-radius: 8px;
  color: #000;
}
.side-nav .active { color: #3a97dc; }

/* toolbar */
.main { flex: 1; min-width: 0; display: flex; flex-direction: column; }
.toolbar {
  flex: none;
  height: 100px;
  display: flex;
  align-items: center;
  padding: 0 62px 0 51px;
  border-bottom: 2px solid #dedede;
}
h1 { font-size: 29px; line-height: 40px; color: #cf6a33; width: 288px; white-space: nowrap; }
.date-group { display: flex; height: 56px; width: 480px; border: 2px solid #e0e0e0; border-radius: 3px; }
.date-group button { width: 60px; display: grid; place-items: center; }
.date-group .cal { width: 79px; border-right: 2px solid #e0e0e0; }
.cal svg { width: 29px; height: 29px; }
.tiny { width: 10px; height: 18px; }
input {
  flex: 1;
  min-width: 0;
  padding: 0 23px;
  border: solid #e0e0e0;
  border-width: 0 2px;
  border-radius: 0;
  background: #f8f8f8;
}
.download {
  width: 53px;
  height: 53px;
  margin-left: auto;
  border-radius: 50%;
  background: #4caf50;
  color: #fff;
  display: grid;
  place-items: center;
}
.download svg { width: 30px; height: 27px; }
.title-row {
  flex: none;
  display: grid;
  grid-template-columns: 26px 1fr 238px;
  align-items: center;
  height: 71px;
  padding: 14px 28px 0 32px;
}
.back svg { width: 26px; height: 34px; }
h2 { display: flex; align-items: center; justify-content: center; gap: 9px; font-size: 31px; line-height: 40px; font-weight: 300; }
.dot { width: 34px; height: 34px; border: 2px solid #111; border-radius: 50%; background: #83e59b; }
.close {
  justify-self: end;
  width: 90px;
  height: 53px;
  border: 2px solid #bcbcbc;
  border-radius: 3px;
  display: grid;
  place-items: center;
}
.close svg { width: 15px; height: 15px; }

/* scrolling content */
.scroll { flex: 1; min-height: 0; display: flex; overflow: hidden; margin-bottom: 29px; }
.columns {
  flex: 1;
  display: grid;
  grid-template-columns: 1fr 1fr;
  gap: 50px;
  padding: 0 26px 0 25px;
}
.column { min-width: 0; }
.track { width: 23px; padding: 4px 5px 0 4px; border-left: 2px solid #e8e8e8; background: #fafafa; }
.thumb { width: 13px; height: 216px; border-radius: 7px; background: #c1c1c1; }
h3 {
  height: 91px;
  margin-bottom: 26px;
  padding-top: 27px;
  border-bottom: 2px solid #e2e2e2;
  font-size: 24px;
  font-weight: 600;
  text-align: center;
}
.done h3 { padding-top: 29px; }
.card { border: 2px solid #dfe0e2; border-radius: 5px; background: #fff; box-shadow: 0 0 30px rgba(0, 0, 0, .07); }
.summary { height: 118px; padding: 15px 30px 0 22px; }
.stats { display: flex; justify-content: space-between; align-items: center; height: 34px; padding-left: 10px; color: #606060; }
.stats span { display: flex; align-items: center; gap: 9px; white-space: nowrap; }
.stats svg { width: 32px; height: 31px; }
.stats svg.big { width: 38px; }
.chips { display: flex; gap: 9px; margin-top: 17px; }
.chips span {
  height: 35px;
  padding: 0 17px;
  border-radius: 18px;
  background: #eceffb;
  font-size: 16px;
  font-weight: 600;
  line-height: 35px;
}

/* maps */
.map { position: relative; height: 500px; margin: 30px 0; overflow: hidden; background: #e6e8ec; }
.map-art { width: 100%; height: 100%; }
.lbl text { font: 400 23px Roboto, sans-serif; fill: #198490; stroke: #fff; stroke-width: 3px; paint-order: stroke; stroke-linejoin: round; }
.lbl .town { fill: #202124; }
.lbl .district { fill: #3c4043; font-size: 21px; font-weight: 500; }
.lbl .suburb { fill: #202124; font-size: 29px; font-weight: 500; }
.lbl .city { fill: #202124; font-size: 38px; font-weight: 700; }
.lbl .park { fill: #23854a; }
.lbl .shop { fill: #2a6fd6; }
.lbl .mid { text-anchor: middle; }
.lbl .end { text-anchor: end; }
.shield rect { fill: #fcd946; stroke: #d9ae2b; }
.shield text { font: 500 17px Roboto, sans-serif; fill: #3f3610; text-anchor: middle; }
.shield.red rect { fill: #d8605f; stroke: #d8605f; }
.shield.red text { fill: #fff; font-weight: 700; }
.stops { fill: #80e497; }
.stops text { font: 700 25px Roboto, sans-serif; fill: #fff; text-anchor: middle; stroke: rgba(90, 120, 95, .5); stroke-width: 1px; paint-order: stroke; }
.done .stops { fill: #7f7f7f; }
.google { position: absolute; left: 17px; bottom: 6px; font: 500 27px/36px Inter, sans-serif; text-shadow: 0 0 2px #fff, 0 0 2px #fff; }
.google i { font-style: normal; }
.google .b { color: #4285f4; }
.google .r { color: #ea4335; }
.google .y { color: #fbbc05; }
.google .g { color: #34a853; }
.zoom {
  position: absolute;
  right: 17px;
  top: 184px;
  width: 66px;
  height: 135px;
  padding: 0 8px;
  border-radius: 3px;
  background: #fff;
  box-shadow: 0 1px 6px rgba(0, 0, 0, .25);
}
.zoom button { display: block; position: relative; width: 100%; height: 67px; }
.zoom .in { border-bottom: 2px solid #e6e6e6; }
.zoom button::before, .zoom .in::after { content: ""; position: absolute; left: 10px; top: 30px; width: 30px; height: 7px; background: #666; }
.zoom .in::after { transform: rotate(90deg); }
.credits {
  position: absolute;
  right: 0;
  bottom: 0;
  display: flex;
  align-items: center;
  height: 23px;
  padding: 0 12px 0 9px;
  background: rgba(245, 246, 247, .75);
  color: #000;
  font: 400 17px/23px Roboto, sans-serif;
  white-space: nowrap;
}
.scale { display: flex; align-items: center; gap: 6px; margin: 0 20px 0 17px; }
.scale i { width: 135px; height: 9px; border: 3px solid #666; border-top: 0; }
.terms { margin-right: 22px; }
.credits svg { width: 14px; height: 16px; }

/* route start and customer cards */
.start { display: flex; align-items: center; height: 80px; margin-bottom: 24px; padding: 0 0 2px 30px; gap: 56px; background: #f0f0f0; }
.start svg { width: 31px; height: 31px; }
.start p { white-space: nowrap; }
.customer { border-width: 1px; min-height: 420px; }
.customer header { display: flex; justify-content: space-between; height: 129px; padding: 16px 63px 0 21px; background: #f0f0f0; border-bottom: 1px solid #e4e4e6; }
.customer h4 { font-size: 27px; line-height: 32px; font-weight: 600; }
.customer header p { padding-top: 3px; font-size: 22px; line-height: 33px; }
.done .customer header { padding-right: 26px; background: #d9ddf9; }
.actions { position: relative; display: flex; align-items: center; align-self: start; margin-top: 31px; }
.time { width: 68px; height: 35px; border: 2px solid #1b6aa5; border-radius: 3px; color: #1b6aa5; font-size: 17px; font-weight: 600; line-height: 31px; text-align: center; }
.dots { display: flex; gap: 6px; margin-left: 13px; }
.dots i { width: 4px; height: 4px; border-radius: 50%; background: #222; }
.details { margin: 0 26px; padding: 16px 0 20px 3px; border-bottom: 2px solid #e2e2e2; }
.details h4 { margin-bottom: 11px; }
.details a { color: #16699f; text-decoration: underline; }

/* actions menu, over the page */
.menu {
  position: absolute;
  z-index: 5;
  right: -17px;
  bottom: 34px;
  width: 421px;
  padding: 13px 0 14px;
  border-radius: 7px;
  background: #fff;
  font-size: 21px;
  box-shadow: 0 6px 20px rgba(0, 0, 0, .45);
}
.menu button { position: relative; display: flex; align-items: center; gap: 18px; width: 100%; height: 80px; padding-left: 28px; white-space: nowrap; }
.menu svg { width: 23px; height: 23px; }
.menu .current { padding-left: 22px; border: 6px solid #147bf8; background: #f4f4f4; }
.step {
  position: absolute;
  right: -18px;
  top: -18px;
  width: 35px;
  height: 35px;
  border-radius: 50%;
  background: #147bf8;
  color: #fff;
  font-weight: 700;
  line-height: 35px;
}
.help {
  position: fixed;
  z-index: 6;
  right: 38px;
  bottom: 33px;
  width: 180px;
  height: 77px;
  border-radius: 39px;
  display: flex;
  align-items: center;
  justify-content: center;
  gap: 12px;
  background: #1560f8;
  color: #fff;
  font-size: 25px;
  font-weight: 700;
}
.help svg { width: 34px; height: 34px; }
```
